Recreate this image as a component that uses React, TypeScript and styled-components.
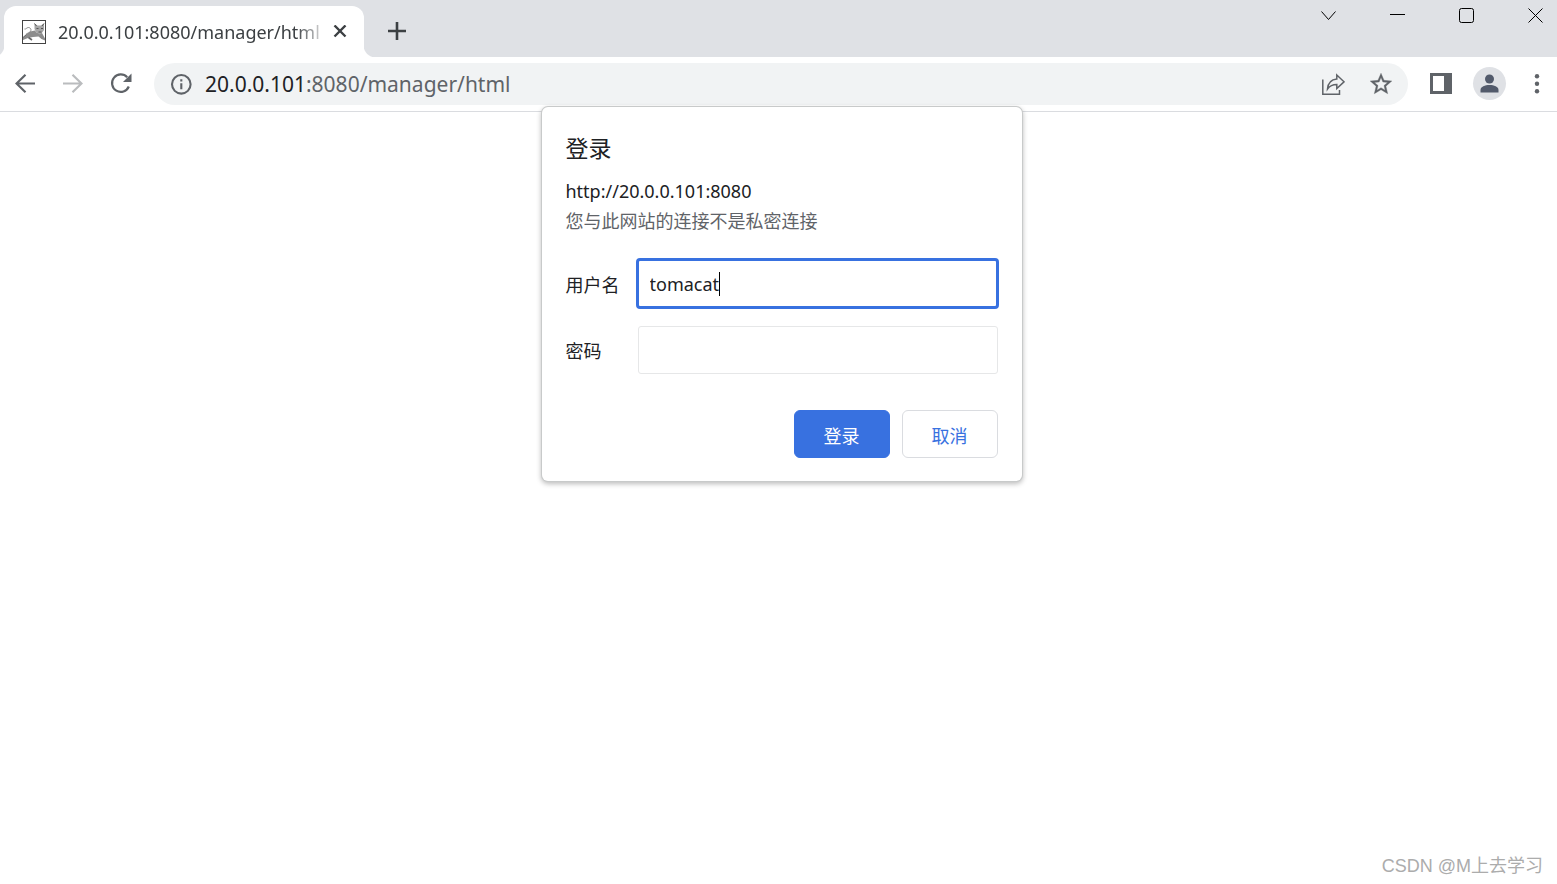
import React, { useState } from "react";
import styled, { createGlobalStyle, css } from "styled-components";

const ui = `"Noto Sans", "Noto Sans CJK SC", sans-serif`;

const GlobalStyle = createGlobalStyle`
  *, *::before, *::after { box-sizing: border-box; }
  body { margin: 0; background: #fff; font-family: ${ui}; color: #202124; }
  button, input { font: inherit; color: inherit; }
`;

const Browser = styled.div`
  position: relative;
  display: flex;
  flex-direction: column;
  min-height: 100vh;
`;

const TabStrip = styled.header`
  display: flex;
  justify-content: space-between;
  height: 57px;
  padding: 6px 0 0 4px;
  background: #dfe1e5;
`;

const Tabs = styled.div`
  display: flex;
`;

const Tab = styled.div`
  position: relative;
  display: flex;
  align-items: center;
  width: 360px;
  padding: 0 12px 0 18px;
  border-radius: 12px 12px 0 0;
  background: #fff;

  &::before, &::after {
    content: "";
    position: absolute;
    bottom: 0;
    width: 12px;
    height: 12px;
  }
  &::before {
    right: 100%;
    background: radial-gradient(circle at 0 0, transparent 12px, #fff 13px);
  }
  &::after {
    left: 100%;
    background: radial-gradient(circle at 100% 0, transparent 12px, #fff 13px);
  }
`;

const TabTitle = styled.span`
  flex: 1;
  min-width: 0;
  margin-left: 12px;
  overflow: hidden;
  white-space: nowrap;
  font-size: 18px;
  line-height: 24px;
  color: #3c4043;
  mask-image: linear-gradient(to right, #000 calc(100% - 32px), transparent);
`;

const IconButton = styled.button<{ $w?: number; $h?: number }>`
  display: flex;
  flex: none;
  align-items: center;
  justify-content: center;
  width: ${(p) => p.$w ?? 48}px;
  height: ${(p) => p.$h ?? 42}px;
  padding: 0;
  border: 0;
  background: none;
  color: #5f6368;
`;

const NewTabButton = styled(IconButton)`
  margin-left: 12px;
  color: #3c4043;
`;

const WindowControls = styled.div`
  display: flex;
  gap: 26px;
`;

const WindowButton = styled(IconButton)`
  width: 43px;
  height: 18px;
  color: #000;
`;

const Toolbar = styled.nav`
  display: flex;
  align-items: center;
  height: 55px;
  padding: 0 0 1px 1px;
  border-bottom: 1px solid #dadce0;
`;

const Omnibox = styled.div`
  display: flex;
  flex: 1;
  align-items: center;
  height: 42px;
  margin: 0 9px;
  padding: 0 3px;
  border-radius: 21px;
  background: #f1f3f4;
`;

const Address = styled.div`
  flex: 1;
  font-size: 21px;
  line-height: 32px;
  color: #5f6368;
`;

const Host = styled.span`
  color: #202124;
`;

const Avatar = styled.span`
  display: flex;
  align-items: center;
  justify-content: center;
  width: 33px;
  height: 33px;
  border-radius: 50%;
  background: #dfe1e5;
`;

const MenuButton = styled(IconButton)`
  margin-left: 4px;
`;

const Page = styled.main`
  display: flex;
  flex: 1;
  flex-direction: column;
  justify-content: flex-end;
`;

const DialogLayer = styled.div`
  position: absolute;
  top: 107px;
  left: 0;
  right: 0;
  display: flex;
  justify-content: center;
  padding-left: 6px;
`;

const Dialog = styled.form`
  width: 480px;
  padding: 24px 24px 23px;
  border-radius: 6px;
  background: #fff;
  font-size: 18px;
  line-height: 30px;
  box-shadow: 0 0 0 1px #c8caca, 0 2px 5px 1px rgba(0, 0, 0, 0.26);
`;

const DialogTitle = styled.h1`
  margin: 0 0 11px;
  font-size: 23px;
  font-weight: 400;
  line-height: 34px;
`;

const Line = styled.p<{ $muted?: boolean }>`
  margin: 0;
  color: ${(p) => (p.$muted ? "#5f6368" : "inherit")};
`;

const Fields = styled.div`
  display: grid;
  grid-template-columns: 72px 1fr;
  align-items: center;
  row-gap: 18px;
  margin-top: 24px;
`;

const Label = styled.label`
  padding-top: 1px;
`;

const Field = styled.div<{ $active?: boolean }>`
  display: flex;
  align-items: center;
  height: 48px;
  padding: 0 11px;
  border: 1px solid #e6e7e8;
  border-radius: 3px;
  ${(p) =>
    p.$active &&
    css`
      height: 51px;
      margin: -2px -1px -1px -2px;
      border: 3px solid #3871e0;
      border-radius: 4px;
    `}
`;

const TextInput = styled.input<{ $hug?: boolean }>`
  min-width: 0;
  height: 30px;
  padding: 0;
  border: 0;
  outline: 0;
  background: none;
  caret-color: transparent;
  ${(p) => (p.$hug ? "field-sizing: content;" : "flex: 1;")}
`;

const Caret = styled.span`
  width: 1px;
  height: 24px;
  background: #000;
`;

const Actions = styled.div`
  display: flex;
  justify-content: flex-end;
  gap: 12px;
  margin-top: 36px;
`;

const ActionButton = styled.button<{ $primary?: boolean }>`
  width: 96px;
  height: 48px;
  padding: 3px 0 0;
  border: 1px solid ${(p) => (p.$primary ? "#3871e0" : "#dadce0")};
  border-radius: 6px;
  background: ${(p) => (p.$primary ? "#3871e0" : "#fff")};
  color: ${(p) => (p.$primary ? "#fff" : "#3871e0")};
`;

const Watermark = styled.footer`
  padding: 0 14px 6px;
  text-align: right;
  font-family: "Liberation Sans", "Noto Sans CJK SC", sans-serif;
  font-size: 18px;
  line-height: 24px;
  color: #acacac;
`;

const CatIcon = () => (
  <svg width="24" height="24" viewBox="0 0 24 24" aria-hidden="true">
    <rect x="0.5" y="0.5" width="23" height="23" fill="#fff" stroke="#444" />
    <path d="M1 17.500 L4 14.500 L8 11.500 L13 10.500 L14.500 12.500 L20 13 L23 18.500 V20.500 L19.500 19 L16.500 16.500 L11 17 L6 18 L1 20Z" fill="#8c8c8c" />
    <path d="M12.500 3.500 L15.500 5.500 H19 L22 3.500 V10 L19.500 13.500 L17.500 14.500 L14 12 L12.500 9Z" fill="#a6a6a6" />
    <path d="M4.500 13.500 C9.500 13 10.500 8 6.500 7.500 C4.500 7.500 4 9.500 2.500 9" fill="none" stroke="#888" />
    <path d="M6.500 17.500 L10 20" stroke="#666" strokeWidth="1.600" />
    <path d="M12.500 3.500 L14.500 6 M22 3.500 L20 6 M14.500 8.500 H16.500 M19 8.500 H21 M16.500 12 H19.500" stroke="#555" />
    <path d="M1 17.500 L4.500 14.500" stroke="#666" />
  </svg>
);

export default function App() {
  const [user, setUser] = useState("tomacat");
  const [password, setPassword] = useState("");

  return (
    <Browser>
      <GlobalStyle />
      <TabStrip>
        <Tabs>
          <Tab>
            <CatIcon />
            <TabTitle>20.0.0.101:8080/manager/html</TabTitle>
            <IconButton $w={24} $h={24} type="button" aria-label="关闭">
              <svg width="14" height="14" viewBox="0 0 14 14" stroke="#3c4043" strokeWidth="2.4">
                <path d="M1.500 0.500 L12.500 11.500 M12.500 0.500 L1.500 11.500" />
              </svg>
            </IconButton>
          </Tab>
          <NewTabButton $w={42} $h={50} type="button" aria-label="新标签页">
            <svg width="18" height="18" viewBox="0 0 18 18" stroke="currentColor" strokeWidth="2.6">
              <path d="M9 0 V18 M0 9 H18" />
            </svg>
          </NewTabButton>
        </Tabs>
        <WindowControls>
          <WindowButton type="button" aria-label="搜索标签页">
            <svg width="15" height="15" viewBox="0 0 15 15" fill="none" stroke="currentColor">
              <path d="M0.500 3.500 L7.500 11.500 L14.500 3.500" />
            </svg>
          </WindowButton>
          <WindowButton type="button" aria-label="最小化">
            <svg width="15" height="15" viewBox="0 0 15 15" stroke="currentColor">
              <path d="M0 6.500 H15" />
            </svg>
          </WindowButton>
          <WindowButton type="button" aria-label="最大化">
            <svg width="15" height="15" viewBox="0 0 15 15" fill="none" stroke="currentColor">
              <rect x="0.5" y="0.5" width="14" height="14" rx="2" />
            </svg>
          </WindowButton>
          <WindowButton type="button" aria-label="关闭窗口">
            <svg width="15" height="15" viewBox="0 0 15 15" stroke="currentColor">
              <path d="M0.500 0.500 L14.500 14.500 M14.500 0.500 L0.500 14.500" />
            </svg>
          </WindowButton>
        </WindowControls>
      </TabStrip>

      <Toolbar>
        <IconButton type="button" aria-label="后退">
          <svg width="20" height="20" viewBox="0 0 20 20" fill="none" stroke="#5f6368" strokeWidth="2.2">
            <path d="M20 9.500 H2 M10.500 0.800 L1.500 9.500 L10.500 18.200" />
          </svg>
        </IconButton>
        <IconButton type="button" aria-label="前进">
          <svg width="20" height="20" viewBox="0 0 20 20" fill="none" stroke="#babcbe" strokeWidth="2.2">
            <path d="M0 9.500 H18 M9.500 0.800 L18.500 9.500 L9.500 18.200" />
          </svg>
        </IconButton>
        <IconButton type="button" aria-label="重新加载">
          <svg width="22" height="22" viewBox="0 0 22 22">
            <path d="M18.800 13.500 A8.700 8.700 0 1 1 17.200 4.300" fill="none" stroke="#5f6368" strokeWidth="2.2" />
            <path d="M21.500 0.500 V9 H13Z" fill="#5f6368" />
          </svg>
        </IconButton>
        <Omnibox>
          <IconButton type="button" aria-label="查看网站信息">
            <svg width="22" height="22" viewBox="0 0 22 22" fill="none" stroke="#5f6368" strokeWidth="2.1">
              <circle cx="11.300" cy="11.300" r="9.300" />
              <path d="M11.300 10.300 V16.300 M11.300 6.300 V8.500" />
            </svg>
          </IconButton>
          <Address>
            <Host>20.0.0.101</Host>:8080/manager/html
          </Address>
          <IconButton type="button" aria-label="分享">
            <svg width="24" height="24" viewBox="0 0 24 24" fill="none" stroke="#5f6368" strokeWidth="1.500">
              <path d="M1.800 7.500 V22.300 H18.500 V18" />
              <path d="M15.800 3 L23 9.800 L15.800 16.500 V12.500 C11.500 12.500 9 13.500 6.500 17 C7 11.500 10 7.500 15.800 7Z" />
            </svg>
          </IconButton>
          <IconButton type="button" aria-label="为此标签页添加书签">
            <svg width="26" height="26" viewBox="0 0 24 24" fill="#5f6368" stroke="#5f6368" strokeWidth="0.300">
              <path d="M22 9.240l-7.190-.620L12 2 9.190 8.630 2 9.240l5.460 4.730L5.820 21 12 17.270 18.180 21l-1.630-7.030L22 9.240zM12 15.400l-3.760 2.270 1-4.280-3.320-2.880 4.380-.380L12 6.100l1.710 4.040 4.380.380-3.320 2.880 1 4.280L12 15.400z" />
            </svg>
          </IconButton>
        </Omnibox>
        <IconButton type="button" aria-label="侧边栏">
          <svg width="22" height="22" viewBox="0 0 22 22">
            <path fillRule="evenodd" fill="#5f6368" d="M0 0H22V21H0Z M3 3V18H14V3Z" />
          </svg>
        </IconButton>
        <IconButton type="button" aria-label="个人资料">
          <Avatar>
            <svg width="19" height="19" viewBox="0 0 19 19" fill="#525a6b">
              <circle cx="9.500" cy="5" r="4.500" />
              <path d="M0.500 18.500V16C0.500 12.500 5 11 9.500 11S18.500 12.500 18.500 16V18.500Z" />
            </svg>
          </Avatar>
        </IconButton>
        <MenuButton $w={40} type="button" aria-label="菜单">
          <svg width="6" height="20" viewBox="0 0 6 20" fill="#5f6368">
            <circle cx="3" cy="2.200" r="2.200" />
            <circle cx="3" cy="9.700" r="2.200" />
            <circle cx="3" cy="17.200" r="2.200" />
          </svg>
        </MenuButton>
      </Toolbar>

      <Page>
        <Watermark>CSDN @M上去学习</Watermark>
      </Page>

      <DialogLayer>
        <Dialog role="dialog" aria-labelledby="dialog-title" onSubmit={(e) => e.preventDefault()}>
          <DialogTitle id="dialog-title">登录</DialogTitle>
          <Line>http://20.0.0.101:8080</Line>
          <Line $muted>您与此网站的连接不是私密连接</Line>
          <Fields>
            <Label htmlFor="user">用户名</Label>
            <Field $active>
              <TextInput $hug id="user" value={user} onChange={(e) => setUser(e.target.value)} />
              <Caret />
            </Field>
            <Label htmlFor="password">密码</Label>
            <Field>
              <TextInput id="password" type="password" value={password} onChange={(e) => setPassword(e.target.value)} />
            </Field>
          </Fields>
          <Actions>
            <ActionButton $primary type="submit">登录</ActionButton>
            <ActionButton type="button">取消</ActionButton>
          </Actions>
        </Dialog>
      </DialogLayer>
    </Browser>
  );
}
